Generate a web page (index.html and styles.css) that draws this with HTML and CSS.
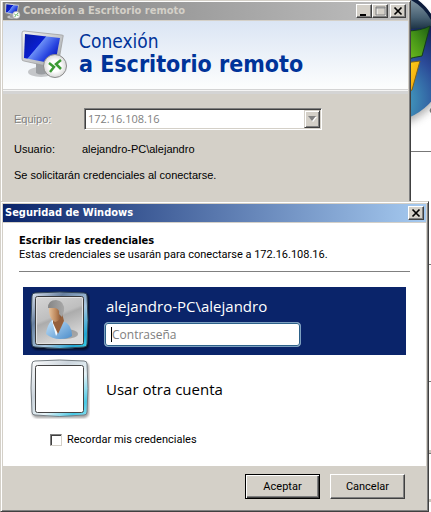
FILE: index.html
```html
<!DOCTYPE html>
<html lang="es">
<head>
<meta charset="utf-8">
<title>Conexión a Escritorio remoto</title>
<link rel="stylesheet" href="styles.css">
</head>
<body>
<svg class="wallpaper" width="60" height="512" viewBox="371 0 60 512" aria-hidden="true">
  <defs>
    <radialGradient id="orb" gradientUnits="userSpaceOnUse" cx="390" cy="100" r="85">
      <stop offset="0" stop-color="#4fb4d0"/><stop offset=".3" stop-color="#3c86b4"/><stop offset=".6" stop-color="#2b4a98"/><stop offset="1" stop-color="#101c52"/>
    </radialGradient>
    <linearGradient id="gloss" x1="0" y1="0" x2="0" y2="1"><stop offset="0" stop-color="#8296a3"/><stop offset=".6" stop-color="#486173"/><stop offset="1" stop-color="#1c3344"/></linearGradient>
    <linearGradient id="green" x1="0" y1="1" x2="1" y2="0"><stop offset="0" stop-color="#76c321"/><stop offset=".5" stop-color="#499818"/><stop offset="1" stop-color="#1c5b12"/></linearGradient>
    <linearGradient id="yellow" x1="0" y1="0" x2="1" y2="1"><stop offset="0" stop-color="#ffd91c"/><stop offset="1" stop-color="#f29a08"/></linearGradient>
    <filter id="soft" x="-20%" y="-20%" width="140%" height="140%"><feGaussianBlur stdDeviation="4"/></filter>
  </defs>
  <circle cx="384" cy="63" r="64" fill="#777" opacity=".6" filter="url(#soft)"/>
  <circle cx="383" cy="58" r="65" fill="url(#orb)"/>
  <path d="M405 0h8q12 7 18 19v7q-10 3-20 3z" fill="url(#gloss)"/>
  <path d="M411 0h7q8 6 13 14v6Q424 7 411 0z" fill="#0c1c3c"/>
  <path d="M405 31q16 0 25-5l-8 30q-8 1-17 4z" fill="url(#green)" stroke="#143d1c"/>
  <path d="M405 63q7-1 15-2l-8 29-7 4z" fill="url(#yellow)" stroke="#7b621a"/>
  <path d="M431 108a3 3 0 0 0 0 5z" fill="#777"/>
  <path d="M410 151.500h21M429 264.500h2M429 381.500h2M429 453.500h2" stroke="#777"/>
  <path d="M429 451.500h2M429 500.500h2" stroke="#c9c5bd" stroke-width="3"/>
</svg>

<main class="desktop">
  <section class="window window-remote" aria-label="Conexión a Escritorio remoto">
    <header class="titlebar titlebar-inactive">
      <svg class="title-icon" viewBox="0 0 48 48" aria-hidden="true"><use href="#monitor"/></svg>
      <h1 class="title">Conexión a Escritorio remoto</h1>
      <div class="captions">
        <button class="caption" type="button" aria-label="Minimizar"><svg viewBox="0 0 12 10"><path d="M2 8h6v2H2z" fill="#000"/></svg></button>
        <button class="caption" type="button" aria-label="Maximizar" disabled><svg viewBox="0 0 12 10"><path d="M3 2h8v8H3z" fill="none" stroke="#fff"/><path d="M2 1h9v8H2zM2 2h9" fill="none" stroke="#808080"/></svg></button>
        <button class="caption caption-close" type="button" aria-label="Cerrar"><svg viewBox="0 0 12 10"><path d="M2.500 1.500l7 7m0-7l-7 7" stroke="#000" stroke-width="1.700"/></svg></button>
      </div>
    </header>
    <div class="banner">
      <svg class="banner-icon" viewBox="0 0 48 48" aria-hidden="true">
        <defs>
          <linearGradient id="screen" x1="0" y1="0" x2="1" y2=".7"><stop offset="0" stop-color="#0618a0"/><stop offset=".44" stop-color="#0a1ed0"/><stop offset=".46" stop-color="#6a8df5"/><stop offset=".75" stop-color="#2744e0"/><stop offset="1" stop-color="#0713b8"/></linearGradient>
          <linearGradient id="bezel" x1="0" y1="0" x2="1" y2="1"><stop offset="0" stop-color="#f5f5f5"/><stop offset="1" stop-color="#9b9fa4"/></linearGradient>
          <radialGradient id="disc"><stop offset=".5" stop-color="#fff"/><stop offset="1" stop-color="#d8d8d8"/></radialGradient>
        </defs>
        <g id="monitor">
          <ellipse cx="20" cy="42" rx="13" ry="5" fill="#c4c6c9"/>
          <path d="M15 33l12 3-1 7q-6 3-11 0z" fill="#9a9da1"/>
          <path d="M3 1l38 4q2 0 1 2l-5 29q0 2-3 2L3 31q-2 0-2-2L1 3q0-2 2-2z" fill="url(#bezel)" stroke="#989898" stroke-width=".7"/>
          <path d="M4 4l35 4-5 26L3 28z" fill="url(#screen)"/>
          <circle cx="34" cy="36" r="11.500" fill="url(#disc)" stroke="#8c8c8c"/>
          <path d="M28 33l5 4-4 5M40 30l-5 4 5 5" fill="none" stroke="#3c9b35" stroke-width="2.500"/>
        </g>
      </svg>
      <p class="banner-text">Conexión<strong>a Escritorio remoto</strong></p>
    </div>
    <form class="remote-form">
      <label class="disabled-label" for="equipo">Equipo:</label>
      <div class="combo">
        <select id="equipo" disabled><option>172.16.108.16</option></select>
        <span class="combo-arrow" aria-hidden="true"><svg viewBox="0 0 11 12"><path d="M2 4h8L6 9z" fill="#fff"/><path d="M1 3h8L5 8z" fill="#808080"/></svg></span>
      </div>
      <span>Usuario:</span>
      <span class="user">alejandro-PC\alejandro</span>
      <p class="notice">Se solicitarán credenciales al conectarse.</p>
    </form>
  </section>

  <section class="window window-security" aria-label="Seguridad de Windows">
    <header class="titlebar titlebar-active">
      <h2 class="title">Seguridad de Windows</h2>
      <div class="captions">
        <button class="caption" type="button" aria-label="Cerrar"><svg viewBox="0 0 12 10"><path d="M2.500 1.500l7 7m0-7l-7 7" stroke="#000" stroke-width="1.700"/></svg></button>
      </div>
    </header>
    <form>
      <div class="credentials">
        <div class="intro">
          <h3>Escribir las credenciales</h3>
          <p>Estas credenciales se usarán para conectarse a 172.16.108.16.</p>
        </div>
        <div class="account account-selected">
          <svg class="tile" viewBox="0 0 60 60" aria-hidden="true">
            <defs>
              <linearGradient id="frame" x1="0" y1="0" x2="1" y2="1"><stop offset="0" stop-color="#fff"/><stop offset=".35" stop-color="#cbd4dc"/><stop offset=".6" stop-color="#e8f4f8"/><stop offset=".85" stop-color="#49c9e5"/><stop offset="1" stop-color="#8be2f2"/></linearGradient>
              <linearGradient id="frame-dark" x1="0" y1="0" x2="1" y2="1"><stop offset="0" stop-color="#e3eaf2"/><stop offset=".3" stop-color="#68809f"/><stop offset=".6" stop-color="#a9c8e2"/><stop offset=".85" stop-color="#20a5d2"/><stop offset="1" stop-color="#42dded"/></linearGradient>
              <linearGradient id="photo" x1="0" y1="0" x2=".4" y2="1"><stop offset="0" stop-color="#d6d6d6"/><stop offset=".48" stop-color="#bfbfbf"/><stop offset=".54" stop-color="#acacac"/><stop offset="1" stop-color="#dadada"/></linearGradient>
              <linearGradient id="shirt" x1="0" y1="0" x2="1" y2="1"><stop offset="0" stop-color="#c5e4fb"/><stop offset="1" stop-color="#4c8dca"/></linearGradient>
              <linearGradient id="skin"><stop offset="0" stop-color="#e6c29c"/><stop offset=".5" stop-color="#bd875b"/><stop offset="1" stop-color="#704225"/></linearGradient>
              <linearGradient id="hair"><stop offset="0" stop-color="#858585"/><stop offset="1" stop-color="#a8a8a8"/></linearGradient>
              <filter id="shade" x="-20%" y="-20%" width="140%" height="140%"><feGaussianBlur stdDeviation="1.300"/></filter>
            </defs>
            <rect x="2" y="2" width="57" height="57" rx="5" fill="#000" opacity=".65" filter="url(#shade)"/>
            <path d="M5 2q25-2 49 0 3 0 3 3 2 25 0 48 0 3-3 3-24 3-49 0-3 0-3-3Q0 29 2 5q0-3 3-3z" fill="url(#frame-dark)" stroke="#354859"/>
            <rect x="5.500" y="5.500" width="48" height="48" rx="2" fill="url(#photo)" stroke="#3a3a3a"/>
            <rect x="6.500" y="6.500" width="46" height="46" rx="1" fill="none" stroke="#e2e2e2"/>
            <ellipse cx="35" cy="43" rx="13" ry="5" fill="#666" opacity=".45"/>
            <path d="M22 29q-5 5-6 14 6 5 14 5 8 0 12-3 0-12-9-15z" fill="url(#shirt)"/>
            <path d="M22 30l4 15 8-15-5-3z" fill="#f5fbff"/>
            <path d="M23 27l9-5 2 8-6 13-5-11z" fill="#95603c"/>
            <path d="M19 16q2-4 8-4 7 0 6 9-2 9-8 10-7-4-6-15z" fill="url(#skin)"/>
            <path d="M18 17q0-8 8-8 9 1 8 11l-2 6-3-3q1-5-4-6h-7z" fill="url(#hair)"/>
          </svg>
          <div class="account-body">
            <label class="account-name" for="password">alejandro-PC\alejandro</label>
            <div class="password"><input id="password" type="text" placeholder="Contraseña"></div>
          </div>
        </div>
        <div class="account">
          <svg class="tile" viewBox="0 0 60 60" aria-hidden="true">
            <rect x="2" y="3" width="57" height="56" rx="5" fill="#000" opacity=".35" filter="url(#shade)"/>
            <path d="M5 2q25-2 49 0 3 0 3 3 2 25 0 48 0 3-3 3-24 3-49 0-3 0-3-3Q0 29 2 5q0-3 3-3z" fill="url(#frame)" stroke="#777f85"/>
            <rect x="5.500" y="6.500" width="48" height="47" rx="2" fill="#fff" stroke="#444"/>
          </svg>
          <span class="account-name">Usar otra cuenta</span>
        </div>
        <div class="remember">
          <input id="remember" type="checkbox">
          <label for="remember">Recordar mis credenciales</label>
        </div>
      </div>
      <footer class="actions">
        <button class="action action-default" type="button">Aceptar</button>
        <button class="action" type="button">Cancelar</button>
      </footer>
    </form>
  </section>
</main>
</body>
</html>
```
FILE: styles.css
```css
* { box-sizing: border-box; }
body {
  margin: 0;
  background: #fff;
  color: #000;
  font: 11px/14px Roboto, "DejaVu Sans Condensed", sans-serif;
}
h1, h2, h3, p { margin: 0; font-size: inherit; }
button, input, select { font: inherit; color: inherit; }
svg { display: block; }
.wallpaper { position: absolute; top: 0; right: 0; }
.desktop { position: relative; display: flex; flex-direction: column; }

.window {
  padding: 1px;
  background: #d4d0c8;
  border: 1px solid;
  border-color: #d4d0c8 #404040 #404040 #d4d0c8;
  box-shadow: inset 1px 1px #fff, inset -1px -1px #808080;
}
.window-remote { margin-right: 20px; padding: 1px 2px 0; border-bottom: 0; box-shadow: inset 1px 1px #fff, inset -1px 0 #808080; }
.window-security { margin-right: 2px; padding: 2px; }

.titlebar { display: flex; align-items: center; height: 18px; padding: 0 2px; }
.titlebar-inactive { background: linear-gradient(90deg, #808080, #c0c0c0); color: #d4d0c8; }
.titlebar-active { background: linear-gradient(90deg, #0a246a, #a6caf0); color: #fff; }
.title, h3 { font-family: "DejaVu Sans Condensed", "DejaVu Sans", sans-serif; font-weight: bold; white-space: nowrap; }
.title { flex: 1; }
.title-icon { width: 16px; height: 16px; margin-right: 2px; }
.captions { display: flex; }
.caption {
  width: 16px;
  height: 14px;
  padding: 1px;
  background: #d4d0c8;
  border: 1px solid;
  border-color: #fff #404040 #404040 #fff;
  box-shadow: inset -1px -1px #808080;
}
.caption svg { width: 12px; height: 10px; }
.caption-close { margin-left: 2px; }

.banner {
  display: flex;
  align-items: center;
  gap: 10px;
  height: 73px;
  margin-top: 1px;
  padding: 0 18px 4px;
  background: linear-gradient(#dbe5f4, #fcfdfd 66px);
  border-bottom: 3px solid #d4d4d4;
  box-shadow: inset 0 -1px #f4f4f4, inset 0 -2px #d4d4d4;
  color: #003399;
}
.banner-icon { width: 48px; height: 48px; }
.banner-text { font: 19px/20px "DejaVu Sans Condensed", "DejaVu Sans", sans-serif; white-space: nowrap; }
.banner-text strong { display: block; font-size: 23px; line-height: 26px; }

.remote-form {
  display: grid;
  grid-template-columns: 68px 1fr;
  row-gap: 12px;
  align-items: center;
  padding: 14px 11px 19px;
  font-family: "Liberation Sans", Arial, sans-serif;
}
.disabled-label { color: #808080; text-shadow: 1px 1px #fff; }
.combo {
  display: flex;
  width: 238px;
  height: 22px;
  margin-left: 2px;
  background: #fff;
  border: 1px solid;
  border-color: #808080 #fff #fff #808080;
  box-shadow: inset 1px 1px #404040, inset -1px -1px #d4d0c8;
  padding: 1px;
}
.combo select {
  flex: 1;
  appearance: none;
  padding: 0 2px;
  border: 0;
  background: transparent;
  color: #808080;
  opacity: 1;
  font-family: "Open Sans", "Noto Sans", sans-serif;
  font-size: 11px;
}
.combo-arrow {
  width: 16px;
  padding: 2px;
  background: #d4d0c8;
  border: 1px solid;
  border-color: #d4d0c8 #404040 #404040 #d4d0c8;
  box-shadow: inset 1px 1px #fff, inset -1px -1px #808080;
}
.combo-arrow svg { width: 11px; height: 12px; }
.notice { grid-column: 1 / -1; }

.credentials { margin-top: 1px; padding: 11px 16px 19px; background: #fff; }
.intro { padding-bottom: 9px; border-bottom: 1px solid #808080; white-space: nowrap; }
.account { display: flex; align-items: center; gap: 16px; height: 68px; margin: 0 4px; padding: 0 7px; }
.account-selected { margin-top: 15px; background: #0a246a; color: #fff; }
.tile { width: 60px; height: 60px; }
.account-name { display: block; font: 15px/20px "Open Sans", "Noto Sans", sans-serif; }
.account-body .account-name { margin-bottom: 6px; }
.password {
  width: 197px;
  height: 25px;
  margin-left: -2px;
  border: 1px solid #7da0c0;
  border-radius: 4px;
  background: #fff;
  box-shadow: inset 0 0 0 1px #2d6189;
}
.password input {
  width: 100%;
  height: 100%;
  padding: 0 7px;
  border: 0;
  outline: 0;
  background: linear-gradient(#000, #000) 6px 50% / 1px 15px no-repeat;
  color: #000;
  font: 12px/16px "Open Sans", "Noto Sans", sans-serif;
}
.password input::placeholder { color: #808080; opacity: 1; }
.remember { display: flex; align-items: center; gap: 5px; margin: 10px 0 0 31px; }
.remember input {
  appearance: none;
  width: 12px;
  height: 12px;
  margin: 0;
  background: #fff;
  border: 1px solid;
  border-color: #808080 #d4d0c8 #d4d0c8 #808080;
  box-shadow: inset 1px 1px #404040;
}

.actions { display: flex; justify-content: flex-end; gap: 10px; padding: 8px 21px 10px; }
.action {
  width: 75px;
  height: 25px;
  padding: 0;
  background: #d4d0c8;
  border: 1px solid;
  border-color: #fff #404040 #404040 #fff;
  box-shadow: inset -1px -1px #808080;
}
.action-default { border-color: #000; box-shadow: inset 1px 1px #fff, inset -1px -1px #404040, inset -2px -2px #808080; }
```
